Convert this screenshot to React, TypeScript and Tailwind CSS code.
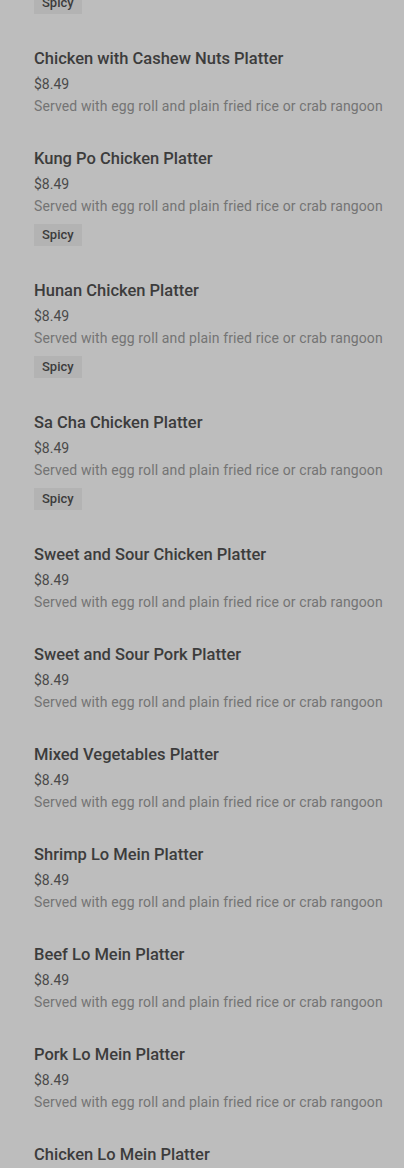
import React from "react";

type Item = {
  name: string;
  price: string;
  spicy?: boolean;
};

const DESC = "Served with egg roll and plain fried rice or crab rangoon";

const items: Item[] = [
  { name: "General Tso's Chicken Platter", price: "$8.49", spicy: true },
  { name: "Chicken with Cashew Nuts Platter", price: "$8.49" },
  { name: "Kung Po Chicken Platter", price: "$8.49", spicy: true },
  { name: "Hunan Chicken Platter", price: "$8.49", spicy: true },
  { name: "Sa Cha Chicken Platter", price: "$8.49", spicy: true },
  { name: "Sweet and Sour Chicken Platter", price: "$8.49" },
  { name: "Sweet and Sour Pork Platter", price: "$8.49" },
  { name: "Mixed Vegetables Platter", price: "$8.49" },
  { name: "Shrimp Lo Mein Platter", price: "$8.49" },
  { name: "Beef Lo Mein Platter", price: "$8.49" },
  { name: "Pork Lo Mein Platter", price: "$8.49" },
  { name: "Chicken Lo Mein Platter", price: "$8.49" },
];

const MenuRow = ({ item }: { item: Item }) => (
  <div className="pl-[34px] pr-5 pt-4 pb-[15px]">
    <div className="text-[16.5px] leading-6 font-medium text-[#3c3c3c] whitespace-nowrap">
      {item.name}
    </div>
    <div className="mt-[3px] text-[14px] leading-5 text-[#4a4a4a]">{item.price}</div>
    <div className="mt-[2px] text-[14px] leading-5 text-[#747474] tracking-[0.12px] whitespace-nowrap">
      {DESC}
    </div>
    {item.spicy && (
      <div className="mt-2 mb-[2px] flex">
        <span className="h-[22px] px-2 flex items-center bg-[#b3b3b3] text-[13px] font-medium text-[#3c3c3c]">
          Spicy
        </span>
      </div>
    )}
  </div>
);

export default function App() {
  return (
    <div
      className="w-full h-[1168px] overflow-hidden bg-[#bdbdbd]"
      style={{ fontFamily: "Roboto, 'Liberation Sans', sans-serif" }}
    >
      <div className="-mt-[101px] flex flex-col">
        {items.map((item) => (
          <MenuRow key={item.name} item={item} />
        ))}
      </div>
    </div>
  );
}
